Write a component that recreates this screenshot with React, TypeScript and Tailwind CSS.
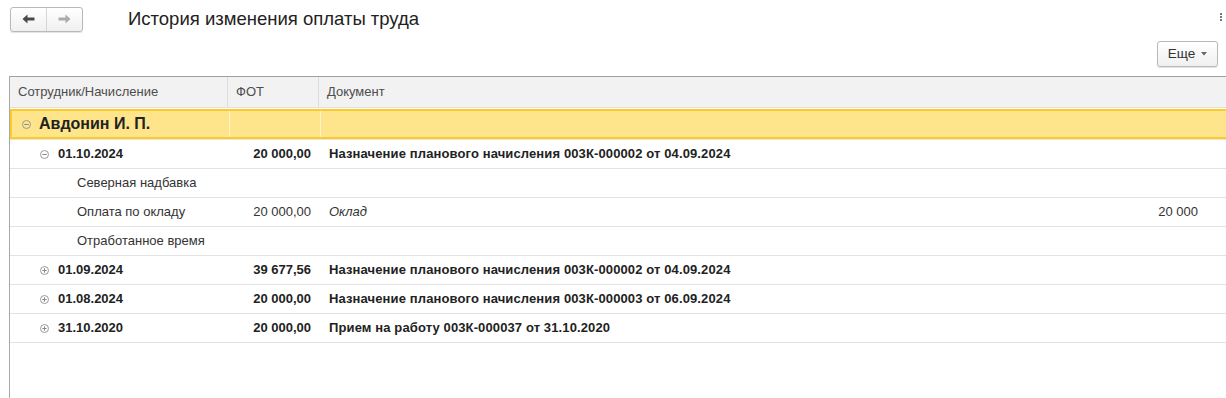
import React from "react";

const font = { fontFamily: '"Liberation Sans", Arial, sans-serif' };

function Toggle({ open }: { open: boolean }) {
  return (
    <svg width="9" height="9" viewBox="0 0 9 9" className="shrink-0">
      <circle cx="4.5" cy="4.5" r="4" fill="none" stroke="#9a9a9a" strokeWidth="1" />
      <line x1="2.3" y1="4.5" x2="6.7" y2="4.5" stroke="#8a8a8a" strokeWidth="1" />
      {!open && <line x1="4.5" y1="2.3" x2="4.5" y2="6.7" stroke="#8a8a8a" strokeWidth="1" />}
    </svg>
  );
}

type Row = {
  kind: "date" | "item";
  name: string;
  fot?: string;
  doc?: string;
  italic?: boolean;
  extra?: string;
  open?: boolean;
};

const rows: Row[] = [
  { kind: "date", name: "01.10.2024", fot: "20 000,00", doc: "Назначение планового начисления 003К-000002 от 04.09.2024", open: true },
  { kind: "item", name: "Северная надбавка" },
  { kind: "item", name: "Оплата по окладу", fot: "20 000,00", doc: "Оклад", italic: true, extra: "20 000" },
  { kind: "item", name: "Отработанное время" },
  { kind: "date", name: "01.09.2024", fot: "39 677,56", doc: "Назначение планового начисления 003К-000002 от 04.09.2024" },
  { kind: "date", name: "01.08.2024", fot: "20 000,00", doc: "Назначение планового начисления 003К-000003 от 06.09.2024" },
  { kind: "date", name: "31.10.2020", fot: "20 000,00", doc: "Прием на работу 003К-000037 от 31.10.2020" },
];

export default function App() {
  return (
    <div className="w-[1226px] h-[398px] bg-white overflow-hidden text-[#333] relative" style={font}>
      {/* Top bar */}
      <div className="flex items-center h-[38px] pl-[10px]">
        <div className="flex h-[25px] w-[73px] rounded-[3px] border border-[#b9b9b9] bg-gradient-to-b from-white to-[#f0f0f0] shadow-[0_1px_1px_rgba(0,0,0,0.12)]">
          <div className="flex-1 flex items-center justify-center border-r border-[#d6d6d6]">
            <svg width="13" height="10" viewBox="0 0 13 10">
              <path d="M0.5 5 L5.5 0.5 L5.5 3.6 L12.5 3.6 L12.5 6.4 L5.5 6.4 L5.5 9.5 Z" fill="#4a4a4a" />
            </svg>
          </div>
          <div className="flex-1 flex items-center justify-center">
            <svg width="13" height="10" viewBox="0 0 13 10">
              <path d="M12.5 5 L7.5 0.5 L7.5 3.6 L0.5 3.6 L0.5 6.4 L7.5 6.4 L7.5 9.5 Z" fill="#ababab" />
            </svg>
          </div>
        </div>
        <div className="ml-[45px] text-[18.5px] text-[#222] leading-none mt-[1px]">История изменения оплаты труда</div>
      </div>
      {/* dots */}
      <div className="absolute right-[4px] top-[13px] flex flex-col gap-[1px]">
        <div className="w-[2px] h-[2px] bg-[#777]" />
        <div className="w-[2px] h-[2px] bg-[#777]" />
        <div className="w-[2px] h-[2px] bg-[#777]" />
      </div>
      {/* Ещё row */}
      <div className="flex justify-end pr-[8px] mt-[3px] h-[35px]">
        <div className="h-[26px] w-[61px] rounded-[3px] border border-[#b9b9b9] bg-gradient-to-b from-white to-[#f0f0f0] shadow-[0_1px_1px_rgba(0,0,0,0.12)] flex items-center justify-center gap-[6px] text-[13.5px] text-[#333]">
          <span>Еще</span>
          <svg width="6" height="4" viewBox="0 0 6 4"><path d="M0 0 H6 L3 3.5 Z" fill="#666" /></svg>
        </div>
      </div>
      {/* Table */}
      <div className="ml-[9px] border-l border-[#a8a8a8] h-[322px]">
        <div className="border-t border-[#a0a0a0]" />
        <div className="grid grid-cols-[218px_91px_1fr] h-[30px] bg-[#f2f2f2] text-[13px] text-[#4d4d4d]">
          <div className="flex items-center pl-[8px] border-r border-[#dcdcdc]">Сотрудник/Начисление</div>
          <div className="flex items-center pl-[8px] border-r border-[#dcdcdc]">ФОТ</div>
          <div className="flex items-center pl-[8px]">Документ</div>
        </div>
        <div className="h-px bg-[#e0e0e0]" />
        <div className="h-px bg-white" />
        {/* Selected row */}
        <div className="grid grid-cols-[218px_91px_1fr] h-[30px] bg-[#fee58c] border-y-2 border-l-2 border-[#fbcb2a]">
          <div className="flex items-center gap-[8px] pl-[10px] border-r border-[#fff4c8]">
            <Toggle open />
            <span className="text-[16px] font-bold text-[#222]">Авдонин И. П.</span>
          </div>
          <div className="border-r border-[#fff4c8]" />
          <div />
        </div>
        <div className="h-px bg-[#e6e6e6]" />
        {rows.map((r, i) => (
          <div key={i} className="grid grid-cols-[218px_91px_1fr_auto] h-[29px] border-b border-[#e3e3e3] text-[13px]">
            {r.kind === "date" ? (
              <div className="flex items-center gap-[9px] pl-[30px] font-bold text-[#222]">
                <Toggle open={!!r.open} />
                <span>{r.name}</span>
              </div>
            ) : (
              <div className="flex items-center pl-[67px] text-[#333]">{r.name}</div>
            )}
            <div className={`flex items-center justify-end pr-[8px] ${r.kind === "date" ? "font-bold text-[#222]" : "text-[#333]"}`}>
              {r.fot}
            </div>
            <div className={`flex items-center pl-[10px] ${r.kind === "date" ? "font-bold text-[#222] tracking-[0.12px]" : "text-[#333]"} ${r.italic ? "italic" : ""}`}>
              {r.doc}
            </div>
            <div className="flex items-center justify-end pr-[28px] text-[#333]">{r.extra}</div>
          </div>
        ))}
      </div>
    </div>
  );
}
